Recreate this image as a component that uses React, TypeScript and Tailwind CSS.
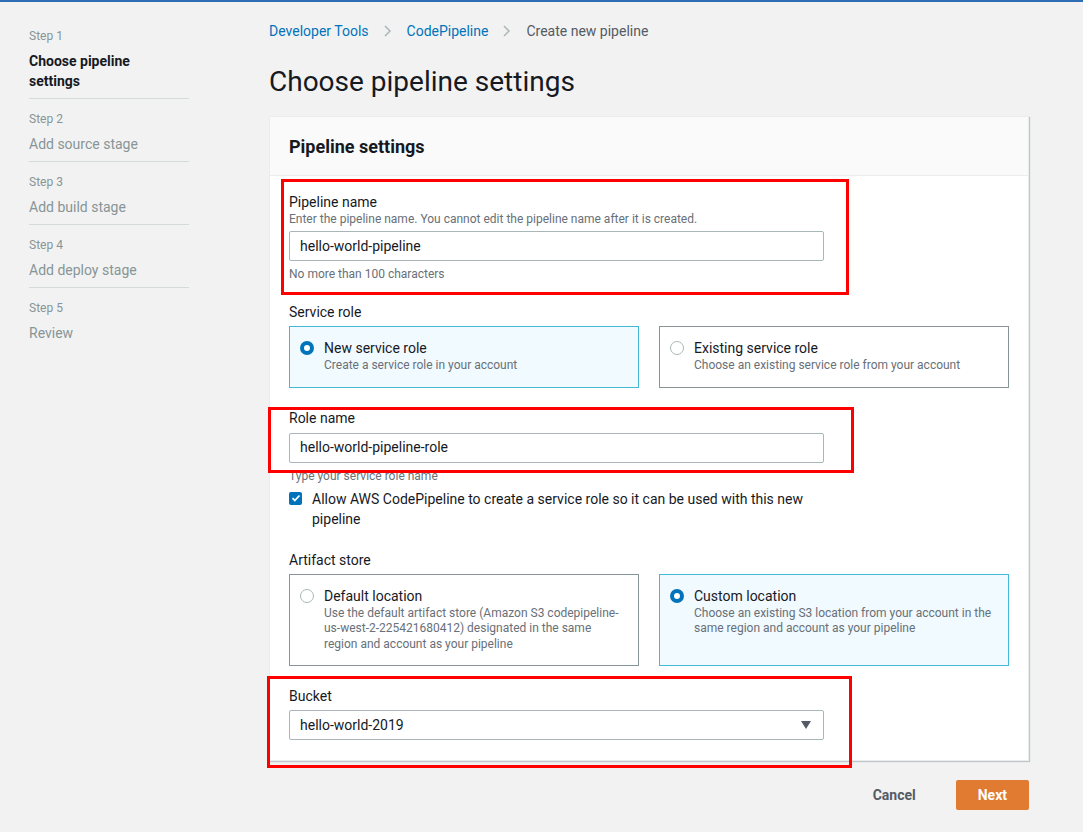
import React from 'react';

const steps = [
  { step: 'Step 1', title: 'Choose pipeline settings', active: true },
  { step: 'Step 2', title: 'Add source stage' },
  { step: 'Step 3', title: 'Add build stage' },
  { step: 'Step 4', title: 'Add deploy stage' },
  { step: 'Step 5', title: 'Review' },
];

const Radio = ({ checked }: { checked?: boolean }) =>
  checked ? (
    <span className="mt-[3px] w-[14px] h-[14px] rounded-full bg-[#0073bb] flex items-center justify-center shrink-0">
      <span className="w-[6px] h-[6px] rounded-full bg-white" />
    </span>
  ) : (
    <span className="mt-[3px] w-[14px] h-[14px] rounded-full border border-[#aab7b8] bg-white shrink-0" />
  );

const Tile = ({
  checked,
  title,
  desc,
  narrow,
}: {
  checked?: boolean;
  title: string;
  desc: React.ReactNode;
  narrow?: boolean;
}) => (
  <div
    className={
      checked
        ? 'flex gap-[10px] px-[10px] pt-[11px] pb-[13px] border border-[#44b9d6] bg-[#f1faff]'
        : 'flex gap-[10px] px-[10px] pt-[11px] pb-[13px] border border-[#879596] bg-white'
    }
  >
    <Radio checked={checked} />
    <div className={narrow ? 'pr-[6px]' : ''}>
      <p className="text-[14px] leading-[20px] text-[#16191f]">{title}</p>
      <p className="text-[12px] leading-[15.5px] text-[#687078]">{desc}</p>
    </div>
  </div>
);

const Input = ({ value }: { value: string }) => (
  <div className="w-[535px] h-[30px] border border-[#aab7b8] rounded-[2px] bg-white px-[10px] flex items-center text-[14px] text-[#16191f]">
    {value}
  </div>
);

const Chevron = () => (
  <svg width="24" height="14" viewBox="0 0 24 14" className="mx-[7px]">
    <path d="M9 2l5 5-5 5" fill="none" stroke="#aab7b8" strokeWidth="1.5" />
  </svg>
);

export default function App() {
  return (
    <div
      className="min-h-[832px] bg-[#f2f2f2] border-t-2 border-[#2d6eb5] text-[#16191f]"
      style={{ fontFamily: 'Roboto, "Liberation Sans", sans-serif' }}
    >
      <div className="flex">
        {/* wizard steps */}
        <nav className="w-[160px] ml-[29px] pt-[26px] shrink-0">
          {steps.map((s, i) => (
            <div key={s.step} className={i < steps.length - 1 ? 'border-b border-[#d5dbdb] pb-[7px] mb-[12px]' : ''}>
              <p className="text-[12px] leading-[16px] text-[#879596]">{s.step}</p>
              <p
                className={
                  s.active
                    ? 'mt-[7px] text-[14px] leading-[20px] font-bold text-[#16191f] pr-[40px]'
                    : 'mt-[7px] text-[14px] leading-[20px] text-[#879596]'
                }
              >
                {s.title}
              </p>
            </div>
          ))}
        </nav>

        {/* main */}
        <main className="ml-[80px] w-[760px] pt-[19px]">
          <div className="flex items-center text-[14px] leading-[20px]">
            <span className="text-[#0073bb]">Developer Tools</span>
            <Chevron />
            <span className="text-[#0073bb]">CodePipeline</span>
            <Chevron />
            <span className="text-[#545b64]">Create new pipeline</span>
          </div>

          <h1 className="mt-[24px] text-[28px] leading-[34px] text-[#16191f]">Choose pipeline settings</h1>

          <section className="mt-[17px] bg-white border border-[#eaeded] shadow-[1px_1px_1px_0_rgba(0,28,36,0.2)]">
            <div className="bg-[#fafafa] border-b border-[#eaeded] h-[59px] px-[19px] flex items-center">
              <h2 className="text-[18px] font-bold text-[#16191f]">Pipeline settings</h2>
            </div>

            <div className="px-[19px] pt-[16px] pb-[20px]">
              <div>
                <p className="text-[14px] leading-[20px]">Pipeline name</p>
                <p className="text-[12px] leading-[14px] text-[#687078]">
                  Enter the pipeline name. You cannot edit the pipeline name after it is created.
                </p>
                <div className="mt-[5px]">
                  <Input value="hello-world-pipeline" />
                </div>
                <p className="mt-[6px] text-[12px] leading-[14px] text-[#687078]">No more than 100 characters</p>
              </div>

              <div className="mt-[21px]">
                <p className="text-[14px] leading-[20px]">Service role</p>
                <div className="mt-[4px] grid grid-cols-2 gap-[20px]">
                  <Tile checked title="New service role" desc="Create a service role in your account" />
                  <Tile title="Existing service role" desc="Choose an existing service role from your account" />
                </div>
              </div>

              <div className="mt-[20px]">
                <p className="text-[14px] leading-[20px]">Role name</p>
                <div className="mt-[5px]">
                  <Input value="hello-world-pipeline-role" />
                </div>
                <p className="mt-[6px] text-[12px] leading-[14px] text-[#687078]">Type your service role name</p>
                <label className="mt-[6px] flex gap-[10px] w-[535px]">
                  <span className="mt-[3px] w-[13px] h-[13px] rounded-[2px] bg-[#0073bb] flex items-center justify-center shrink-0">
                    <svg width="10" height="10" viewBox="0 0 10 10">
                      <path d="M1.5 5.2l2.3 2.3L8.5 2.5" fill="none" stroke="white" strokeWidth="1.8" />
                    </svg>
                  </span>
                  <span className="text-[14px] leading-[20px]">
                    Allow AWS CodePipeline to create a service role so it can be used with this new pipeline
                  </span>
                </label>
              </div>

              <div className="mt-[21px]">
                <p className="text-[14px] leading-[20px]">Artifact store</p>
                <div className="mt-[4px] grid grid-cols-2 gap-[20px]">
                  <Tile
                    narrow
                    title="Default location"
                    desc="Use the default artifact store (Amazon S3 codepipeline-us-west-2-225421680412) designated in the same region and account as your pipeline"
                  />
                  <Tile
                    checked
                    title="Custom location"
                    desc="Choose an existing S3 location from your account in the same region and account as your pipeline"
                  />
                </div>
              </div>

              <div className="mt-[20px]">
                <p className="text-[14px] leading-[20px]">Bucket</p>
                <div className="mt-[4px] w-[535px] h-[30px] border border-[#aab7b8] rounded-[2px] bg-white pl-[10px] pr-[12px] flex items-center justify-between text-[14px]">
                  <span>hello-world-2019</span>
                  <svg width="10" height="8" viewBox="0 0 10 8">
                    <path d="M0 0h10L5 8z" fill="#545b64" />
                  </svg>
                </div>
              </div>
            </div>
          </section>

          <div className="mt-[19px] flex justify-end items-center gap-[20px]">
            <button className="px-[20px] h-[30px] text-[14px] font-bold text-[#545b64]">Cancel</button>
            <button className="px-[22px] h-[30px] rounded-[2px] bg-[#e07b31] text-[14px] font-bold text-white">
              Next
            </button>
          </div>
        </main>
      </div>

      {/* annotation boxes */}
      <div className="absolute left-[281px] top-[179px] w-[568px] h-[116px] border-[3px] border-[#ff0000] pointer-events-none" />
      <div className="absolute left-[268px] top-[407px] w-[586px] h-[66px] border-[3px] border-[#ff0000] pointer-events-none" />
      <div className="absolute left-[267px] top-[676px] w-[585px] h-[92px] border-[3px] border-[#ff0000] pointer-events-none" />
    </div>
  );
}
